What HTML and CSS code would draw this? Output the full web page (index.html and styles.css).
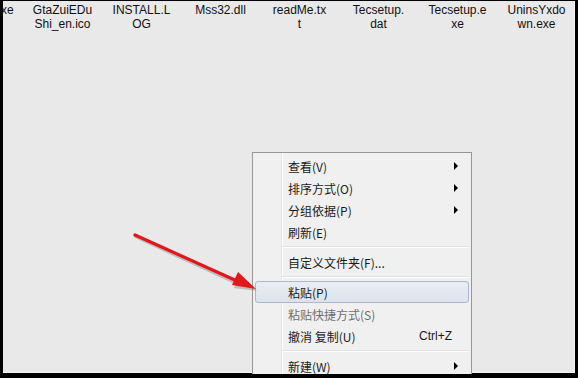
FILE: index.html
```html
<!DOCTYPE html>
<html lang="zh-CN">
<head>
    <meta charset="UTF-8">
    <title>右键菜单</title>
    <link rel="stylesheet" href="styles.css">
</head>
<body>
    <div class="screen">
        <div class="files">
            <div class="file file-cut">xe</div>
            <div class="file">GtaZuiEDu<br>Shi_en.ico</div>
            <div class="file">INSTALL.L<br>OG</div>
            <div class="file">Mss32.dll</div>
            <div class="file">readMe.tx<br>t</div>
            <div class="file">Tecsetup.<br>dat</div>
            <div class="file">Tecsetup.e<br>xe</div>
            <div class="file">UninsYxdo<br>wn.exe</div>
        </div>

        <!-- context menu -->
        <div class="menu">
            <div class="item"><span class="label">查看(V)</span><span class="sub"></span></div>
            <div class="item"><span class="label">排序方式(O)</span><span class="sub"></span></div>
            <div class="item"><span class="label">分组依据(P)</span><span class="sub"></span></div>
            <div class="item"><span class="label">刷新(E)</span></div>
            <div class="sep"></div>
            <div class="item"><span class="label">自定义文件夹(F)...</span></div>
            <div class="sep"></div>
            <div class="item active"><span class="label">粘贴(P)</span></div>
            <div class="item disabled"><span class="label">粘贴快捷方式(S)</span></div>
            <div class="item"><span class="label">撤消 复制(U)</span><span class="key">Ctrl+Z</span></div>
            <div class="sep"></div>
            <div class="item"><span class="label">新建(W)</span><span class="sub"></span></div>
        </div>
    </div>

    <!-- red pointer arrow -->
    <svg class="pointer" width="578" height="378" viewBox="0 0 578 378">
        <g fill="#6a6a6a" stroke="#6a6a6a" opacity="0.35">
            <line x1="136" y1="237" x2="238" y2="284" stroke-width="3" stroke-linecap="round"/>
            <polygon points="257,291 234,288 240,275" stroke="none"/>
        </g>
        <g fill="#e3161b" stroke="#e3161b">
            <line x1="135" y1="235" x2="237" y2="281" stroke-width="3.2" stroke-linecap="round"/>
            <polygon points="256,289 232,285 238,272" stroke="none"/>
        </g>
    </svg>
</body>
</html>
```

FILE: styles.css
```css
* {
    box-sizing: border-box;
    margin: 0;
    padding: 0;
}

body {
    background-color: #000;
    width: 578px;
    height: 378px;
    overflow: hidden;
    font-family: "Liberation Sans", "Noto Sans CJK SC", sans-serif;
    font-size: 12px;
    color: #111;
}

/* Desktop / folder area */
.screen {
    position: relative;
    margin: 1px 3px 0 3px;
    height: 372px;
    background-color: #e9e9e9;
    border-right: 1px solid #f6f6f6;
    border-bottom: 1px solid #f6f6f6;
}

.files {
    display: grid;
    grid-template-columns: 20px repeat(7, 79px);
    padding-top: 2px;
    line-height: 14px;
}

.file {
    text-align: center;
    white-space: nowrap;
}

.file-cut {
    text-align: left;
    margin-left: -2px;
}

/* Context menu */
.menu {
    position: absolute;
    left: 249px;
    top: 151px;
    width: 220px;
    padding: 2px 2px 0 2px;
    background-color: #f0f0f0;
    background-image: linear-gradient(to right, transparent 28px, #e2e3e3 28px, #e2e3e3 29px, #fff 29px, #fff 30px, transparent 30px);
    border: 1px solid #979797;
    border-bottom: none;
    height: 222px;
    font-family: "Noto Sans CJK SC", "Liberation Sans", sans-serif;
    font-size: 12px;
    color: #1a1a1a;
}

.item {
    display: flex;
    align-items: center;
    height: 22px;
    padding-left: 32px;
    border: 1px solid transparent;
    border-radius: 3px;
}

.item .label {
    flex: 1;
}

.item.active {
    border-color: #a9b8cf;
    background: linear-gradient(to bottom, #eaeef4, #dce3ec);
}

.item.disabled {
    color: #6f6f6f;
}

.key {
    font-family: "Liberation Sans", sans-serif;
    padding-right: 16px;
}

.sub {
    width: 14px;
    height: 8px;
}

.sub::before {
    content: "";
    display: block;
    width: 0;
    height: 0;
    border-left: 4px solid #000;
    border-top: 4px solid transparent;
    border-bottom: 4px solid transparent;
}

.sep {
    height: 8px;
    margin-left: 27px;
    background: linear-gradient(to bottom, transparent 3px, #e0e0e0 3px, #e0e0e0 4px, #fff 4px, #fff 5px, transparent 5px);
}

/* Red arrow overlay */
.pointer {
    position: absolute;
    left: 0;
    top: 0;
    pointer-events: none;
}
```
